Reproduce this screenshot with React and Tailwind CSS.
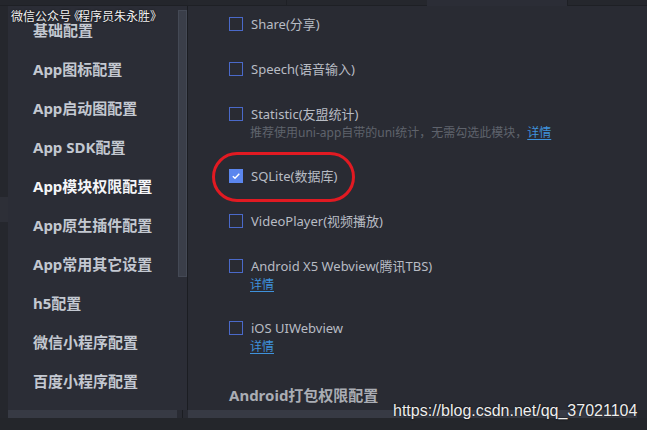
import React from "react";

const sideItems = [
  "基础配置",
  "App图标配置",
  "App启动图配置",
  "App SDK配置",
  "App模块权限配置",
  "App原生插件配置",
  "App常用其它设置",
  "h5配置",
  "微信小程序配置",
  "百度小程序配置",
];

function Box({ checked }) {
  if (checked) {
    return (
      <div className="w-[14px] h-[14px] bg-[#5b86ee] flex items-center justify-center shrink-0">
        <svg width="10" height="10" viewBox="0 0 10 10">
          <polyline points="1.8,5.2 4,7.3 8.3,2.8" fill="none" stroke="#ffffff" strokeWidth="1.4" />
        </svg>
      </div>
    );
  }
  return <div className="w-[14px] h-[14px] border border-[#4a69c9] shrink-0" />;
}

function Row({ label, checked, className = "" }) {
  return (
    <div className={"h-[20px] flex items-center gap-[8px] " + className}>
      <Box checked={checked} />
      <span className="text-[13px] leading-[20px] text-[#b8bcc4] whitespace-nowrap">{label}</span>
    </div>
  );
}

function Detail() {
  return <span className="text-[12px] leading-[18px] text-[#3f92dc] underline underline-offset-2">详情</span>;
}

export default function App() {
  const font = { fontFamily: '"Noto Sans", "Noto Sans CJK SC", sans-serif' };
  return (
    <div className="w-[647px] h-[430px] relative overflow-hidden bg-[#24262c] flex flex-col" style={font}>
      {/* top strip */}
      <div className="h-[6px] flex shrink-0">
        <div className="w-[188px] bg-[#24262c] border-b border-[#1e2025]" />
        <div className="w-[99px] bg-[#25272d] border-b border-r border-[#1e2025]" />
        <div className="w-[140px] bg-[#25272d] border-b border-[#1e2025]" />
        <div className="w-[140px] bg-[#2b2d36]" />
        <div className="flex-1 bg-[#25272d] border-b border-l border-[#1e2025]" />
      </div>

      {/* middle */}
      <div className="h-[404px] flex shrink-0">
        <div className="w-[8px] bg-[#25272d] flex flex-col">
          <div className="h-[191px]" />
          <div className="h-[25px] bg-[#2d2f37]" />
        </div>
        <div className="w-[170px] bg-[#2b2d36] pt-[5px] pl-[25px] flex flex-col">
          {sideItems.map((t, i) => (
            <div
              key={t}
              className={
                "h-[39px] flex items-center text-[15px] font-bold whitespace-nowrap " +
                (i === 4 ? "text-[#f4f5f8]" : "text-[#c3c8d1]")
              }
            >
              {t}
            </div>
          ))}
        </div>
        <div className="w-[9px] bg-[#2b2d36] pt-[4px]">
          <div className="h-[267px] w-[9px] bg-[#3a3e49] border border-[#444955]" />
        </div>
        <div className="w-[1px] bg-[#1b1d22]" />
        <div className="flex-1 bg-[#292b33] pl-[41px] pt-[8px] flex flex-col">
          <Row label="Share(分享)" />
          <Row label="Speech(语音输入)" className="mt-[25px]" />
          <Row label="Statistic(友盟统计)" className="mt-[25px]" />
          <div className="pl-[21px] h-[18px] flex items-center whitespace-nowrap">
            <span className="text-[12px] leading-[18px] text-[#5f636c]">推荐使用uni-app自带的uni统计，无需勾选此模块，</span>
            <Detail />
          </div>
          <Row label="SQLite(数据库)" checked className="mt-[24px]" />
          <Row label="VideoPlayer(视频播放)" className="mt-[25px]" />
          <Row label="Android X5 Webview(腾讯TBS)" className="mt-[25px]" />
          <div className="pl-[21px] h-[18px] flex items-center">
            <Detail />
          </div>
          <Row label="iOS UIWebview" className="mt-[24px]" />
          <div className="pl-[21px] h-[18px] flex items-center">
            <Detail />
          </div>
          <div className="mt-[29px] h-[20px] flex items-center text-[15px] font-bold text-[#aaadb4] whitespace-nowrap">
            Android打包权限配置
          </div>
        </div>
      </div>

      {/* bottom band */}
      <div className="h-[8px] flex shrink-0">
        <div className="w-[8px] bg-[#25272d]" />
        <div className="w-[169px] bg-[#373a44]" />
        <div className="w-[11px] bg-[#292b33] flex justify-center">
          <div className="w-[1px] bg-[#1b1d22]" />
        </div>
        <div className="w-[449px] bg-[#373a44]" />
        <div className="flex-1 bg-[#25272d]" />
      </div>
      <div className="flex-1 bg-[#24262b]" />

      {/* annotation */}
      <div className="absolute left-[212px] top-[152px] w-[143px] h-[50px] border-[3px] border-[#e11a22] rounded-[26px]" />

      {/* watermarks */}
      <div className="absolute left-[11px] top-[7px] font-['Noto_Sans_CJK_SC',sans-serif] text-[12px] leading-[18px] text-[#f2f2f2] whitespace-nowrap [text-shadow:0_0_2px_#000]">
        微信公众<span className="tracking-[-3px]">号</span><span className="tracking-[-2px]">《</span>程序员朱永胜<span className="tracking-[-5px]">》</span>
      </div>
      <div className="absolute left-[393px] top-[401px] font-['Liberation_Sans',Arial,sans-serif] text-[16px] leading-[20px] text-[#eeeeee] whitespace-nowrap [text-shadow:0_0_2px_#000]">
        https://blog.csdn.net/qq_37021104
      </div>
    </div>
  );
}
